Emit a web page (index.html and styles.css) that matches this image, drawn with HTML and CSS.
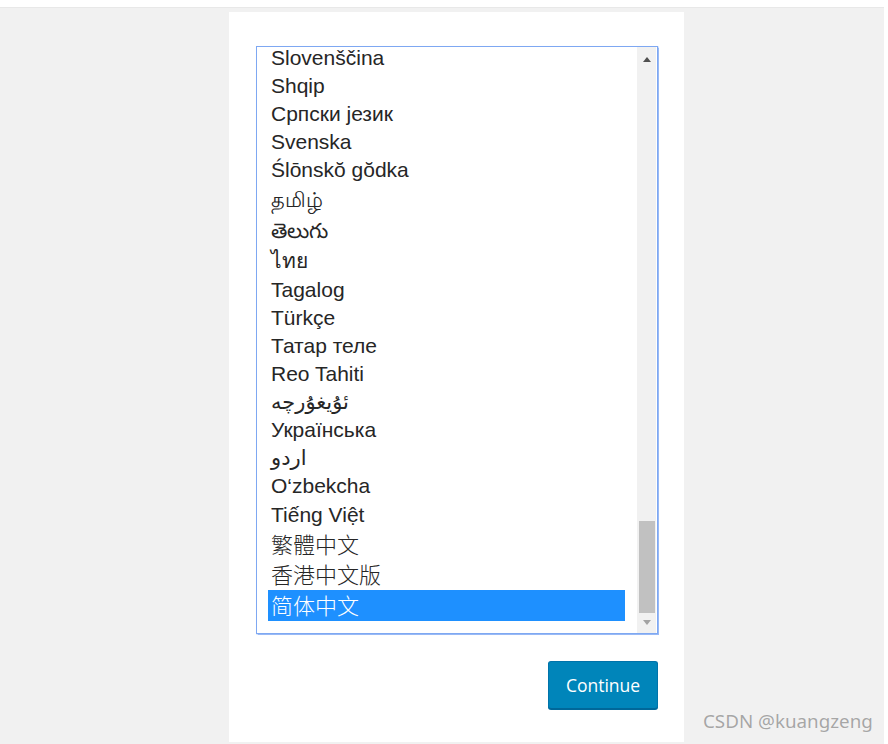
FILE: index.html
```html
<!DOCTYPE html>
<html lang="en">
<head>
<meta charset="utf-8">
<title>Select a default language</title>
<link rel="stylesheet" href="styles.css">
</head>
<body>
<div class="page">
  <div class="card">
    <div class="listbox">
      <div class="list">
        <div class="opt">Slovenščina</div>
        <div class="opt">Shqip</div>
        <div class="opt">Српски језик</div>
        <div class="opt">Svenska</div>
        <div class="opt">Ślōnskŏ gŏdka</div>
        <div class="opt tall">தமிழ்</div>
        <div class="opt tall">తెలుగు</div>
        <div class="opt mid">ไทย</div>
        <div class="opt">Tagalog</div>
        <div class="opt">Türkçe</div>
        <div class="opt">Татар теле</div>
        <div class="opt">Reo Tahiti</div>
        <div class="opt" dir="rtl">ئۇيغۇرچە</div>
        <div class="opt">Українська</div>
        <div class="opt" dir="rtl">اردو</div>
        <div class="opt">O‘zbekcha</div>
        <div class="opt mid">Tiếng Việt</div>
        <div class="opt mid cjk">繁體中文</div>
        <div class="opt mid cjk">香港中文版</div>
        <div class="opt tall cjk selected">简体中文</div>
      </div>
      <div class="scrollbar">
        <span class="arrow up"></span>
        <div class="track"><div class="thumb"></div></div>
        <span class="arrow down"></span>
      </div>
    </div>
    <div class="actions">
      <button class="btn" type="button">Continue</button>
    </div>
  </div>
  <div class="watermark">CSDN @kuangzeng</div>
</div>
</body>
</html>
```

FILE: styles.css
```css
html, body {
  margin: 0;
  padding: 0;
  background: #ffffff;
}
body {
  width: 888px;
  height: 744px;
  overflow: hidden;
}
.page {
  position: relative;
  margin-top: 7px;
  margin-right: 4px;
  height: 737px;
  background: #f1f1f1;
  border-top: 1px solid #e8e8e8;
  box-sizing: border-box;
  padding-top: 4px;
  padding-left: 229px;
}
.card {
  width: 455px;
  height: 730px;
  background: #ffffff;
  box-sizing: border-box;
  padding: 34px 26px 0 27px;
}
.listbox {
  width: 402px;
  height: 588px;
  box-sizing: border-box;
  border: 1px solid #7ea8f2;
  box-shadow: 0 0 1px 0.5px rgba(126, 168, 242, 0.8);
  display: flex;
  overflow: hidden;
  background: #fff;
}
.list {
  flex: 1;
  margin-top: -3px;
  padding: 0 12px 0 11px;
  font-family: "Liberation Sans", "DejaVu Sans", "Noto Sans CJK SC", sans-serif;
  font-size: 21px;
  color: #262626;
}
.opt {
  height: 28px;
  line-height: 28px;
  padding-left: 3px;
  white-space: nowrap;
  text-align: left;
}
.opt[dir="rtl"] {
  text-align: left;
  direction: ltr;
  unicode-bidi: plaintext;
}
.opt.tall {
  height: 31px;
  line-height: 31px;
}
.opt.mid {
  height: 30px;
  line-height: 30px;
}
.opt.cjk {
  font-family: "Noto Sans CJK SC", "Liberation Sans", sans-serif;
  font-size: 22px;
  font-weight: 300;
  line-height: 27px;
}
.opt.tall.cjk {
  line-height: 29px;
}
.opt.selected {
  background: #1e90ff;
  color: #ffffff;
}
.scrollbar {
  width: 19px;
  margin-right: 1px;
  background: #f1f1f1;
  display: flex;
  flex-direction: column;
  align-items: center;
}
.arrow {
  width: 0;
  height: 0;
  border-left: 4px solid transparent;
  border-right: 4px solid transparent;
}
.arrow.up {
  margin-top: 10px;
  border-bottom: 5px solid #505050;
}
.arrow.down {
  margin-top: 7px;
  margin-bottom: 8px;
  border-top: 5px solid #a3a3a3;
}
.track {
  flex: 1;
  width: 100%;
  display: flex;
  flex-direction: column;
  justify-content: flex-end;
  align-items: center;
}
.thumb {
  width: 16px;
  height: 92px;
  background: #c1c1c1;
}
.actions {
  display: flex;
  justify-content: flex-end;
  padding-top: 27px;
}
.btn {
  width: 110px;
  height: 48px;
  border: 1px solid #0073aa;
  border-bottom-color: #006799;
  border-radius: 3px;
  background: #0085ba;
  box-shadow: 0 1px 0 #006799;
  color: #ffffff;
  font-family: "Open Sans", "Noto Sans", sans-serif;
  font-size: 17.5px;
  padding: 0;
  cursor: pointer;
}
.watermark {
  position: absolute;
  left: 703px;
  top: 700px;
  font-family: "Noto Sans", "Open Sans", sans-serif;
  font-size: 18.8px;
  color: #a6a6a6;
  text-shadow: 0 0 1px #ffffff;
  white-space: nowrap;
}
```
